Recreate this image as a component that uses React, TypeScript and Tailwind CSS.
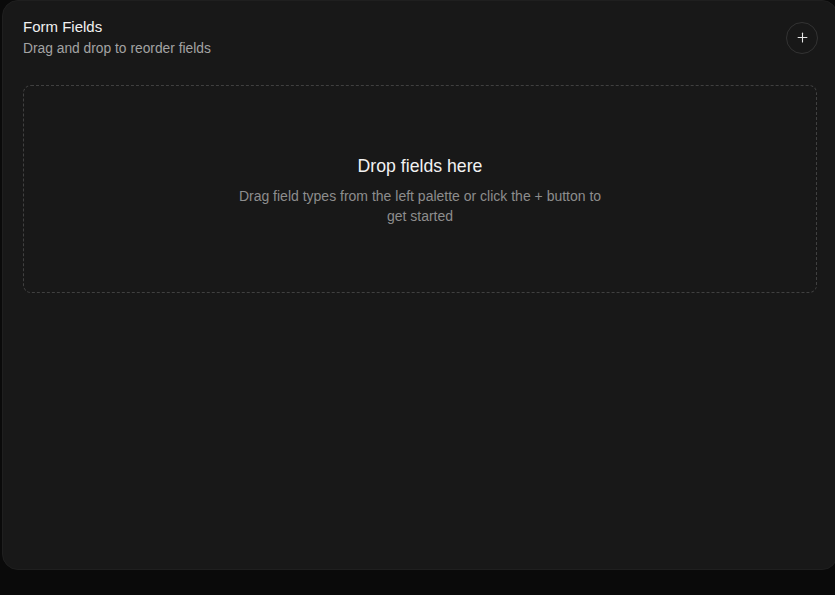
import { Plus } from "lucide-react";

function EmptyDropZone() {
  return (
    <div className="mt-[26px] flex h-[208px] flex-col items-center justify-center rounded-lg border border-dashed border-[#404040] px-6 pt-[1px] text-center">
      <h3 className="text-[17.7px] leading-[24px] text-[#f2f2f2]">Drop fields here</h3>
      <p className="mt-[8px] max-w-[380px] text-[14px] leading-[20px] text-[#8d8d8d]">
        Drag field types from the left palette or click the + button to get started
      </p>
    </div>
  );
}

export default function App() {
  return (
    <div
      className="h-[595px] w-full overflow-hidden bg-[#0a0a0a] pl-[2px]"
      style={{ fontFamily: '"Liberation Sans", Arial, sans-serif' }}
    >
      <section className="h-[570px] w-[836px] rounded-2xl border border-[#1f1f1f] bg-[#181818] px-[20px] pt-[15px]">
        <header className="flex items-center justify-between">
          <div>
            <h2 className="text-[15px] leading-[22px] text-[#f0f0f0]">Form Fields</h2>
            <p className="mt-[1px] text-[13.8px] leading-[20px] text-[#a3a3a3]">Drag and drop to reorder fields</p>
          </div>
          <button
            type="button"
            aria-label="Add field"
            className="mr-[-1px] flex h-[32px] w-[32px] items-center justify-center rounded-full border border-[#333] bg-[#181818] text-[#e5e5e5]"
          >
            <Plus size={15} strokeWidth={1.75} />
          </button>
        </header>
        <EmptyDropZone />
      </section>
    </div>
  );
}
